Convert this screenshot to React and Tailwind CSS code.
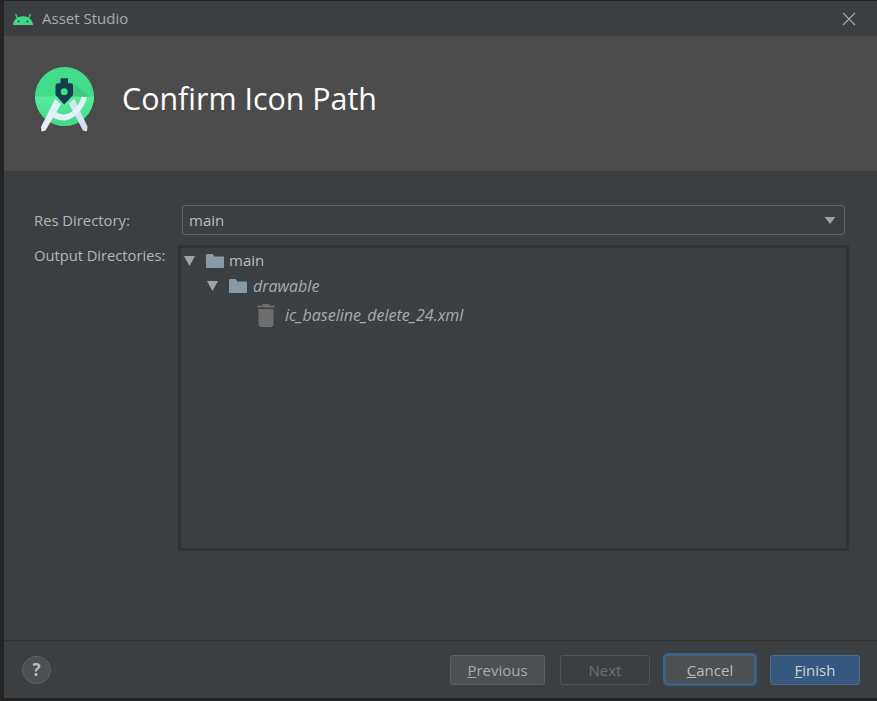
const font = { fontFamily: '"Open Sans", "Noto Sans", sans-serif' };

const AndroidHead = () => (
  <svg width="20" height="12" viewBox="0 0 20 12" className="shrink-0">
    <path d="M0 12C0.3 7.500 3.500 3.200 10 3.200S19.700 7.500 20 12Z" fill="#3ddc84" />
    <path d="M4.200 4.800L2.600 1M15.800 4.800L17.400 1" stroke="#3ddc84" strokeWidth="1.200" fill="none" />
    <circle cx="5.600" cy="8.400" r="1" fill="#3c3f41" />
    <circle cx="14.400" cy="8.400" r="1" fill="#3c3f41" />
  </svg>
);

const StudioLogo = () => (
  <svg width="62" height="66" viewBox="0 0 62 66" className="shrink-0">
    <defs>
      <linearGradient id="logoLower" x1="0" y1="0" x2="0" y2="1">
        <stop offset="0" stopColor="#5aeb9e" />
        <stop offset="1" stopColor="#3ddc84" />
      </linearGradient>
    </defs>
    <circle cx="30.500" cy="30.500" r="29.500" fill="#43dc8a" />
    <path d="M1 30.500H60A29.500 29.500 0 0 1 1 30.500Z" fill="url(#logoLower)" />
    <path d="M38 17L56 30.500H36Z" fill="#3ccb80" />
    <path d="M21 33L27 38L11.500 64.500L7.500 65.500L7 61Z" fill="#e6f0f8" />
    <path d="M34.500 37L40.500 33L53.500 60.500L53 65.500L49 64.500Z" fill="#d3e3f0" />
    <path d="M53 31C50 44 38 54.500 30 54.500C24 54.500 18 51 14 48L17.500 42C21 46 26 48.500 30 48.500C38 48.500 45 40 47.500 31Z" fill="#e6f0f8" />
    <path d="M21.500 20Q21.500 17.300 24 17.300H26.500V12.300H34V17.300H36.500Q39 17.300 39 20V29L30.200 38.500L21.500 29Z" fill="#143c4e" />
    <circle cx="30.200" cy="25.700" r="3.500" fill="#3ddc84" />
  </svg>
);

const Caret = () => (
  <svg width="11" height="10" viewBox="0 0 11 10" className="shrink-0">
    <path d="M0 0H11L5.500 10Z" fill="#a0a3a5" />
  </svg>
);

const Folder = () => (
  <svg width="18" height="14" viewBox="0 0 18 14" className="shrink-0">
    <path d="M0 1.500C0 .8.500 0 1.300 0H6.500L8.500 2.500H17C17.600 2.500 18 3 18 3.500V13C18 13.600 17.600 14 17 14H1C.4 14 0 13.600 0 13Z" fill="#8a99a6" />
  </svg>
);

const Trash = () => (
  <svg width="18" height="23" viewBox="0 0 18 23" className="shrink-0">
    <path d="M6 0H12L13 1.500H17.500V3.500H.5V1.500H5Z" fill="#6e6e6e" />
    <path d="M1.500 5H16.500V20.500C16.500 21.800 15.500 23 14 23H4C2.500 23 1.500 21.800 1.500 20.500Z" fill="#6e6e6e" />
  </svg>
);

const App = () => {
  return (
    <div
      className="w-[877px] h-[701px] overflow-hidden flex flex-col bg-[#242424] pl-[4px] pt-[1px] pb-[3px] text-[#bbbbbb]"
      style={font}
    >
      <div className="h-[35px] shrink-0 bg-[#3c3f41] flex items-center pl-[9px] pr-[21px]">
        <AndroidHead />
        <span className="ml-[9px] text-[15px] text-[#a9abad]">Asset Studio</span>
        <svg width="14" height="14" viewBox="0 0 14 14" className="ml-auto">
          <path d="M1 1L13 13M13 1L1 13" stroke="#a8a8a8" strokeWidth="1.100" fill="none" />
        </svg>
      </div>

      <div className="h-[135px] shrink-0 bg-[#4b4b4b] flex items-center pl-[30px] pb-[10px]">
        <StudioLogo />
        <h1 className="ml-[26px] text-[30.4px] text-white font-normal">Confirm Icon Path</h1>
      </div>

      <div className="flex-1 bg-[#3c3f41] pl-[30px] pr-[28px] pt-[34px]">
        <div className="flex items-center h-[30px]">
          <label className="w-[148px] text-[14.8px] text-[#b4b6b8]">Res Directory:</label>
          <div className="flex-1 h-[30px] mr-[4px] rounded-[3px] border border-[#646464] bg-[#3c3f41] flex items-center justify-between pl-[6px] pr-[8px]">
            <span className="text-[15px] text-[#bbbbbb]">main</span>
            <svg width="12" height="7" viewBox="0 0 12 7">
              <path d="M0.500 0H11.500L6 7Z" fill="#a0a3a5" />
            </svg>
          </div>
        </div>

        <div className="flex mt-[10px]">
          <label className="w-[144px] text-[14.7px] text-[#b4b6b8] leading-[20px]">Output Directories:</label>
          <div className="w-[671px] h-[306px] border-[3px] border-[#323334] text-[15px]">
            <div className="flex items-center h-[25px] pl-[3px]">
              <Caret />
              <span className="ml-[11px]"><Folder /></span>
              <span className="ml-[5px]">main</span>
            </div>
            <div className="flex items-center h-[26px] pl-[26px] italic text-[#a9abad]">
              <Caret />
              <span className="ml-[11px]"><Folder /></span>
              <span className="ml-[6px] text-[16px]">drawable</span>
            </div>
            <div className="flex items-center h-[32px] pl-[76px] italic text-[#a9abad]">
              <Trash />
              <span className="ml-[10px] text-[16px]">ic_baseline_delete_24.xml</span>
            </div>
          </div>
        </div>
      </div>

      <div className="h-[58px] shrink-0 bg-[#3c3f41] border-t border-[#323232] flex items-center pl-[18px] pr-[17px]">
        <div className="w-[29px] h-[28px] rounded-full bg-[#4c5052] border border-[#5e6060] flex items-center justify-center text-[17px] font-bold text-[#bbbbbb]">
          ?
        </div>
        <button className="ml-auto w-[95px] h-[30px] pt-[1px] rounded-[3px] border border-[#5e6060] bg-[#4c5052] text-[15px] text-[#a9abad]">
          <u>P</u>revious
        </button>
        <button className="ml-[15px] w-[90px] h-[30px] pt-[1px] rounded-[3px] border border-[#505354] text-[15px] text-[#6e6e6e]">
          Next
        </button>
        <button className="ml-[13px] w-[94px] h-[33px] pt-[1px] rounded-[5px] border-[3px] border-[#3d6185] bg-[#4c5052] text-[15px] text-[#bbbbbb]">
          <u>C</u>ancel
        </button>
        <button className="ml-[13px] w-[90px] h-[30px] pt-[1px] rounded-[3px] border border-[#4c708c] bg-[#365880] text-[15px] text-[#cfd3d6]">
          <u>F</u>inish
        </button>
      </div>
    </div>
  );
};

export default App;
